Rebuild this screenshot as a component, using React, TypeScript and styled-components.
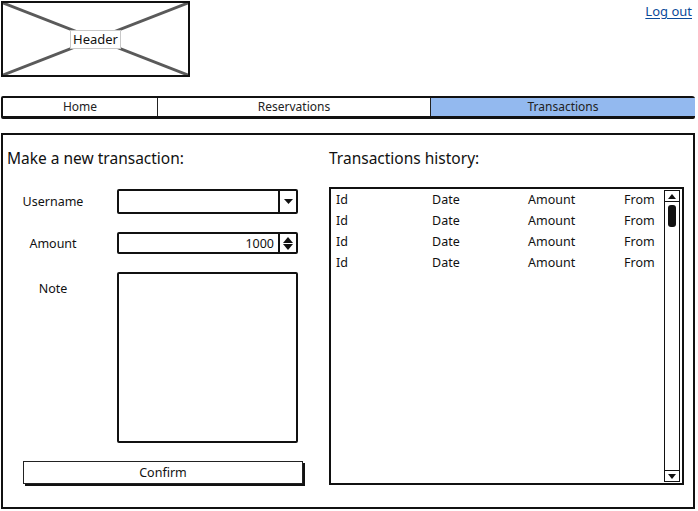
import React from 'react';
import styled, { createGlobalStyle } from 'styled-components';

// == styles =======================================================================================
const Global = createGlobalStyle`
  html, body {
    margin: 0;
    padding: 0;
    background: #ffffff;
  }
  body {
    font-family: "Noto Sans", "Open Sans", sans-serif;
    color: #222222;
  }
`;

const Page = styled.div`
  width: 698px;
  height: 511px;
  box-sizing: border-box;
  padding: 1px 0 0 1px;
  display: flex;
  flex-direction: column;
  overflow: hidden;
`;

const Top = styled.div`
  display: flex;
  justify-content: space-between;
  align-items: flex-start;
`;

const Placeholder = styled.div`
  position: relative;
  width: 189px;
  height: 76px;
  box-sizing: border-box;
  border: 2px solid #111111;
  display: flex;
  align-items: center;
  justify-content: center;
`;

const Cross = styled.svg`
  position: absolute;
  inset: 0;
  width: 100%;
  height: 100%;
`;

const PlaceholderLabel = styled.span`
  position: relative;
  background: #ffffff;
  border: 1px solid #c8c8c8;
  padding: 0 2px;
  font-size: 13px;
  line-height: 17px;
  color: #111111;
`;

const LogOut = styled.a`
  margin: 1px 6px 0 0;
  font-size: 13px;
  color: #0a4a9a;
  text-decoration: underline;
  text-underline-offset: 2px;
  text-decoration-thickness: 1px;
`;

const TabBar = styled.div`
  margin-top: 19px;
  width: 694px;
  height: 23px;
  box-sizing: border-box;
  display: flex;
  border: 2px solid #111111;
  border-bottom-width: 3px;
  border-radius: 2px 3px 2px 2px;
`;

const Tab = styled.div<{ w: number; first?: boolean; active?: boolean }>`
  flex: 0 0 ${ ( { w } ) => w }px;
  display: flex;
  align-items: center;
  justify-content: center;
  font-size: 12px;
  line-height: 16px;
  color: #222222;
  background: ${ ( { active } ) => ( active ? '#93b9ef' : '#ffffff' ) };
  border-left: ${ ( { first } ) => ( first ? 'none' : '1px solid #222222' ) };
`;

const Panel = styled.div`
  margin-top: 14px;
  width: 694px;
  height: 376px;
  box-sizing: border-box;
  border: 2px solid #111111;
  display: grid;
  grid-template-columns: 326px 1fr;
`;

const Column = styled.div<{ padLeft: number }>`
  display: flex;
  flex-direction: column;
  padding-left: ${ ( { padLeft } ) => padLeft }px;
`;

const Heading = styled.div`
  margin-top: 13px;
  font-size: 15.5px;
  line-height: 20px;
  color: #111111;
`;

const Form = styled.div`
  margin-top: 21px;
  display: grid;
  grid-template-columns: 100px 181px;
  column-gap: 14px;
  row-gap: 18px;
  margin-left: -4px;
`;

const Label = styled.div<{ top?: number }>`
  font-size: 12.5px;
  color: #111111;
  text-align: center;
  align-self: ${ ( { top } ) => ( top !== undefined ? 'start' : 'center' ) };
  padding-top: ${ ( { top } ) => top ?? 0 }px;
`;

const Field = styled.div<{ h: number }>`
  height: ${ ( { h } ) => h }px;
  box-sizing: border-box;
  border: 2px solid #111111;
  border-radius: 2px;
  display: flex;
  background: #ffffff;
`;

const FieldText = styled.div`
  flex: 1;
  display: flex;
  align-items: center;
  justify-content: flex-end;
  padding-right: 4px;
  font-size: 12.5px;
  color: #111111;
`;

const FieldButton = styled.div<{ stacked?: boolean }>`
  width: 16px;
  border-left: 2px solid #111111;
  display: flex;
  flex-direction: ${ ( { stacked } ) => ( stacked ? 'column' : 'row' ) };
  gap: 1px;
  align-items: center;
  justify-content: center;
`;

const Confirm = styled.div`
  margin: 18px 0 0 16px;
  width: 280px;
  height: 23px;
  box-sizing: border-box;
  border: 1px solid #222222;
  box-shadow: 2px 2px 0 #111111;
  display: flex;
  align-items: center;
  justify-content: center;
  font-size: 12.5px;
  color: #111111;
`;

const List = styled.div`
  margin-top: 19px;
  width: 355px;
  height: 298px;
  box-sizing: border-box;
  border: 2px solid #111111;
  display: flex;
`;

const Rows = styled.div`
  flex: 1;
  padding: 0 0 0 5px;
`;

const Row = styled.div`
  display: grid;
  grid-template-columns: 96px 96px 96px 1fr;
  height: 21px;
  align-items: center;
  font-size: 12.5px;
  color: #111111;
`;

const Scroll = styled.div`
  width: 14px;
  margin: 1px 2px 1px 0;
  border: 1px solid #111111;
  display: flex;
  flex-direction: column;
  align-items: center;
  justify-content: space-between;
`;

const ScrollTrack = styled.div`
  flex: 1;
  width: 100%;
  padding-top: 3px;
  display: flex;
  justify-content: center;
`;

const Thumb = styled.div`
  width: 8px;
  height: 22px;
  border-radius: 3px;
  background: #111111;
`;

const ScrollArrow = styled.div<{ pos: 'top' | 'bottom' }>`
  width: 100%;
  height: 11px;
  box-sizing: border-box;
  ${ ( { pos } ) => ( pos === 'top' ? 'border-bottom' : 'border-top' ) }: 1px solid #111111;
  display: flex;
  align-items: center;
  justify-content: center;
`;

// == components ===================================================================================
function Arrow( { up, w = 8 }: { up?: boolean; w?: number } ): JSX.Element {
  return (
    <svg width={ w } height={ Math.round( w * 0.6 ) } viewBox="0 0 8 5" preserveAspectRatio="none">
      <polygon points={ up ? '0,5 8,5 4,0' : '0,0 8,0 4,5' } fill="#111111" />
    </svg>
  );
}

const rows = [ 0, 1, 2, 3 ];

export default function App(): JSX.Element {
  return (
    <Page>
      <Global />
      <Top>
        <Placeholder>
          <Cross viewBox="0 0 185 72" preserveAspectRatio="none">
            <line x1="0" y1="0" x2="185" y2="72" stroke="#5a5a5a" strokeWidth="3" />
            <line x1="185" y1="0" x2="0" y2="72" stroke="#5a5a5a" strokeWidth="3" />
          </Cross>
          <PlaceholderLabel>Header</PlaceholderLabel>
        </Placeholder>
        <LogOut href="#">Log out</LogOut>
      </Top>

      <TabBar>
        <Tab w={ 154 } first>Home</Tab>
        <Tab w={ 272 }>Reservations</Tab>
        <Tab w={ 264 } active>Transactions</Tab>
      </TabBar>

      <Panel>
        <Column padLeft={ 4 }>
          <Heading>Make a new transaction:</Heading>
          <Form>
            <Label>Username</Label>
            <Field h={ 25 }>
              <FieldText />
              <FieldButton><Arrow w={ 9 } /></FieldButton>
            </Field>
            <Label>Amount</Label>
            <Field h={ 22 }>
              <FieldText>1000</FieldText>
              <FieldButton stacked>
                <Arrow up w={ 10 } />
                <Arrow w={ 10 } />
              </FieldButton>
            </Field>
            <Label top={ 8 }>Note</Label>
            <Field h={ 171 } />
          </Form>
          <Confirm>Confirm</Confirm>
        </Column>

        <Column padLeft={ 0 }>
          <Heading>Transactions history:</Heading>
          <List>
            <Rows>
              { rows.map( ( i ) => (
                <Row key={ i }>
                  <span>Id</span>
                  <span>Date</span>
                  <span>Amount</span>
                  <span>From</span>
                </Row>
              ) ) }
            </Rows>
            <Scroll>
              <ScrollArrow pos="top"><Arrow up /></ScrollArrow>
              <ScrollTrack><Thumb /></ScrollTrack>
              <ScrollArrow pos="bottom"><Arrow /></ScrollArrow>
            </Scroll>
          </List>
        </Column>
      </Panel>
    </Page>
  );
}
